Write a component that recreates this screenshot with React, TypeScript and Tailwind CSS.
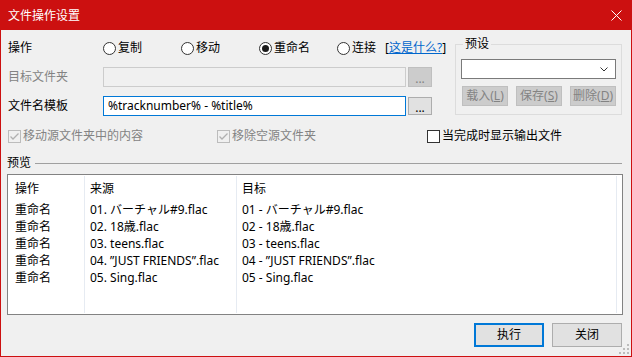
import React from "react";

const rows = [
  { src: "01. バーチャル#9.flac", dst: "01 - バーチャル#9.flac" },
  { src: "02. 18歳.flac", dst: "02 - 18歳.flac" },
  { src: "03. teens.flac", dst: "03 - teens.flac" },
  { src: "04. \u201dJUST FRIENDS\u201d.flac", dst: "04 - \u201dJUST FRIENDS\u201d.flac" },
  { src: "05. Sing.flac", dst: "05 - Sing.flac" },
];

function Radio({ label, checked, className }: { label: string; checked?: boolean; className: string }) {
  return (
    <div className={`flex items-center gap-[2px] ${className}`}>
      <span className="w-[13px] h-[13px] rounded-full border border-[#333333] bg-white flex items-center justify-center">
        {checked && <span className="w-[7px] h-[7px] rounded-full bg-[#1a1a1a]" />}
      </span>
      <span>{label}</span>
    </div>
  );
}

function Check({ label, checked, disabled, className }: { label: string; checked?: boolean; disabled?: boolean; className: string }) {
  return (
    <div className={`flex items-center gap-[2px] ${className}`}>
      <span
        className={`w-[13px] h-[13px] border flex items-center justify-center ${
          disabled ? "border-[#bcbcbc] bg-[#f0f0f0]" : "border-[#333333] bg-white"
        }`}
      >
        {checked && (
          <svg width="11" height="11" viewBox="0 0 11 11">
            <polyline points="1.5,5.5 4,8 9.5,2.5" fill="none" stroke="#b0b0b0" strokeWidth="1.3" />
          </svg>
        )}
      </span>
      <span className={disabled ? "text-[#838383]" : "text-black"}>{label}</span>
    </div>
  );
}

function DisabledButton({ main, key_ }: { main: string; key_: string }) {
  return (
    <div className="w-[46px] h-[20px] border border-[#bfbfbf] bg-[#cccccc] text-[#838383] flex items-center justify-center">
      {main}(<span className="underline">{key_}</span>)
    </div>
  );
}

export default function App() {
  return (
    <div className="font-['Noto_Sans','Noto_Sans_CJK_SC','Noto_Sans_CJK_JP',sans-serif] text-[12px] leading-[16px] text-black">
      <div className="relative flex flex-col w-[632px] h-[357px] border border-[#cc1010] bg-[#f0f0f0]">
        {/* Title bar */}
        <div className="h-[29px] bg-[#cc1010] flex items-center justify-between pl-[7px] pr-[9px] text-white">
          <span>文件操作设置</span>
          <svg width="11" height="11" viewBox="0 0 11 11">
            <line x1="0.5" y1="0.5" x2="10.5" y2="10.5" stroke="white" strokeWidth="1" />
            <line x1="10.5" y1="0.5" x2="0.5" y2="10.5" stroke="white" strokeWidth="1" />
          </svg>
        </div>

        {/* Top section */}
        <div className="flex">
          <div className="w-[454px] pl-[7px] flex flex-col">
            <div className="mt-[8px] h-[20px] flex items-center">
              <span className="w-[95px]">操作</span>
              <Radio label="复制" className="w-[78px]" />
              <Radio label="移动" className="w-[78px]" />
              <Radio label="重命名" checked className="w-[78px]" />
              <Radio label="连接" className="w-[48px]" />
              <span>
                [<span className="text-[#0066cc] underline">这是什么?</span>]
              </span>
            </div>
            <div className="mt-[9px] h-[20px] flex items-center">
              <span className="w-[95px] text-[#838383]">目标文件夹</span>
              <div className="w-[303px] h-[20px] border border-[#cccccc] bg-[#f0f0f0]" />
              <div className="ml-[2px] w-[24px] h-[20px] border border-[#bfbfbf] bg-[#cccccc] text-[#838383] flex items-end justify-center leading-[14px]">
                ...
              </div>
            </div>
            <div className="mt-[9px] h-[20px] flex items-center">
              <span className="w-[95px]">文件名模板</span>
              <div className="w-[303px] h-[20px] border border-[#0078d7] bg-white flex items-center pl-[4px]">
                %tracknumber% - %title%
              </div>
              <div className="ml-[2px] w-[24px] h-[18px] border border-[#adadad] bg-[#e1e1e1] flex items-end justify-center leading-[13px]">
                ...
              </div>
            </div>
          </div>

          {/* Preset group */}
          <div className="mt-[14px] w-[167px] h-[71px] border border-[#dcdcdc] flex flex-col">
            <span className="-mt-[9px] ml-[7px] px-[2px] w-fit bg-[#f0f0f0]">预设</span>
            <div className="mt-[7px] ml-[5px] w-[155px] h-[20px] border border-[#7a7a7a] bg-white flex items-center justify-end pr-[7px]">
              <svg width="8" height="5" viewBox="0 0 8 5">
                <polyline points="0.5,0.5 4,4 7.5,0.5" fill="none" stroke="#333333" strokeWidth="1" />
              </svg>
            </div>
            <div className="mt-[7px] ml-[6px] flex gap-[8px]">
              <DisabledButton main="载入" key_="L" />
              <DisabledButton main="保存" key_="S" />
              <DisabledButton main="删除" key_="D" />
            </div>
          </div>
        </div>

        {/* Checkboxes */}
        <div className="mt-[11px] h-[18px] flex items-center pl-[7px]">
          <Check label="移动源文件夹中的内容" checked disabled className="w-[209px]" />
          <Check label="移除空源文件夹" checked disabled className="w-[210px]" />
          <Check label="当完成时显示输出文件" className="" />
        </div>

        {/* Preview heading */}
        <div className="mt-[10px] h-[16px] flex items-center pl-[6px] pr-[9px]">
          <span>预览</span>
          <div className="flex-1 ml-[4px] h-px bg-[#a0a0a0]" />
        </div>

        {/* Preview list */}
        <div className="mt-[3px] ml-[6px] w-[616px] h-[141px] border border-[#828282] bg-white flex py-[1px]">
          <div className="w-[77px] border-r border-[#e6ebf2] pl-[7px]">
            <div className="h-[25px] flex items-center">操作</div>
            {rows.map((r) => (
              <div key={r.src} className="h-[17px] leading-[17px]">
                重命名
              </div>
            ))}
          </div>
          <div className="w-[152px] border-r border-[#e6ebf2] pl-[5px]">
            <div className="h-[25px] flex items-center">来源</div>
            {rows.map((r) => (
              <div key={r.src} className="h-[17px] leading-[17px] whitespace-nowrap">
                {r.src}
              </div>
            ))}
          </div>
          <div className="w-[380px] border-r border-[#e6ebf2] pl-[5px]">
            <div className="h-[25px] flex items-center">目标</div>
            {rows.map((r) => (
              <div key={r.dst} className="h-[17px] leading-[17px] whitespace-nowrap">
                {r.dst}
              </div>
            ))}
          </div>
        </div>

        {/* Bottom buttons */}
        <div className="mt-[8px] flex justify-end gap-[8px] pr-[9px]">
          <div className="w-[70px] h-[24px] border-2 border-[#0078d7] bg-[#e1e1e1] flex items-center justify-center">
            执行
          </div>
          <div className="w-[70px] h-[24px] border border-[#adadad] bg-[#e1e1e1] flex items-center justify-center">
            关闭
          </div>
        </div>

        {/* Size grip */}
        <svg className="absolute right-[1px] bottom-[1px]" width="11" height="11" viewBox="0 0 11 11">
          <rect x="8" y="0" width="2" height="2" fill="#bcbcbc" />
          <rect x="4" y="4" width="2" height="2" fill="#bcbcbc" />
          <rect x="8" y="4" width="2" height="2" fill="#bcbcbc" />
          <rect x="0" y="8" width="2" height="2" fill="#bcbcbc" />
          <rect x="4" y="8" width="2" height="2" fill="#bcbcbc" />
          <rect x="8" y="8" width="2" height="2" fill="#bcbcbc" />
        </svg>
      </div>
    </div>
  );
}
